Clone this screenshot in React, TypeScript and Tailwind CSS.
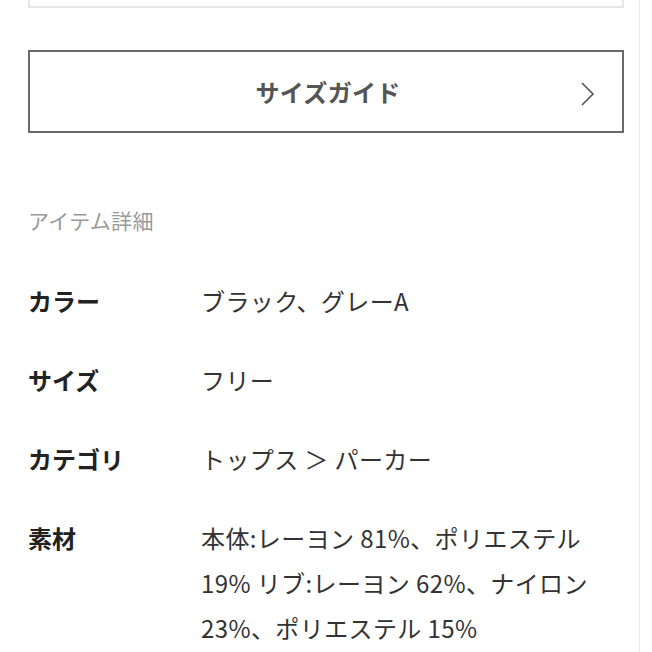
import React from 'react';

const rows: { label: string; value: string }[] = [
  { label: 'カラー', value: 'ブラック、グレーA' },
  { label: 'サイズ', value: 'フリー' },
  { label: 'カテゴリ', value: 'トップス ＞ パーカー' },
  { label: '素材', value: '本体:レーヨン 81%、ポリエステル19% リブ:レーヨン 62%、ナイロン23%、ポリエステル 15%' },
];

export default function App() {
  return (
    <div
      className="w-[652px] h-[652px] overflow-hidden bg-white"
      style={{ fontFamily: '"Noto Sans CJK JP", "Noto Sans", sans-serif' }}
    >
      <div className="w-[640px] h-full border-r border-[#ececec] pl-[28px] pr-[16px]">
        {/* bottom of the previous box */}
        <div className="h-[8px] w-[596px] border-x-2 border-b-2 border-[#e6e6e6]" />

        {/* size guide button */}
        <button className="mt-[42px] w-[596px] h-[83px] border-2 border-[#6a6a6a] flex items-center relative">
          <span className="flex-1 text-center text-[24px] font-bold text-[#555] tracking-[0.3px] pl-[4px]">
            サイズガイド
          </span>
          <svg
            className="absolute right-[26px] top-[29px]"
            width="16"
            height="26"
            viewBox="0 0 16 26"
            fill="none"
            stroke="#555"
            strokeWidth="1.6"
          >
            <path d="M2 2 L13 13 L2 24" />
          </svg>
        </button>

        {/* item details */}
        <div className="mt-[72px] text-[21px] leading-[30px] tracking-[0.3px] text-[#9a9a9a]">アイテム詳細</div>

        <div className="mt-[43px] flex flex-col gap-[34px]">
          {rows.map((r) => (
            <div key={r.label} className="flex items-start">
              <div className="w-[173px] shrink-0 text-[24px] leading-[45px] font-bold text-[#222]">
                {r.label}
              </div>
              <div className="w-[400px] text-[24px] leading-[45px] tracking-[0.4px] text-[#333]">{r.value}</div>
            </div>
          ))}
        </div>
      </div>
    </div>
  );
}
